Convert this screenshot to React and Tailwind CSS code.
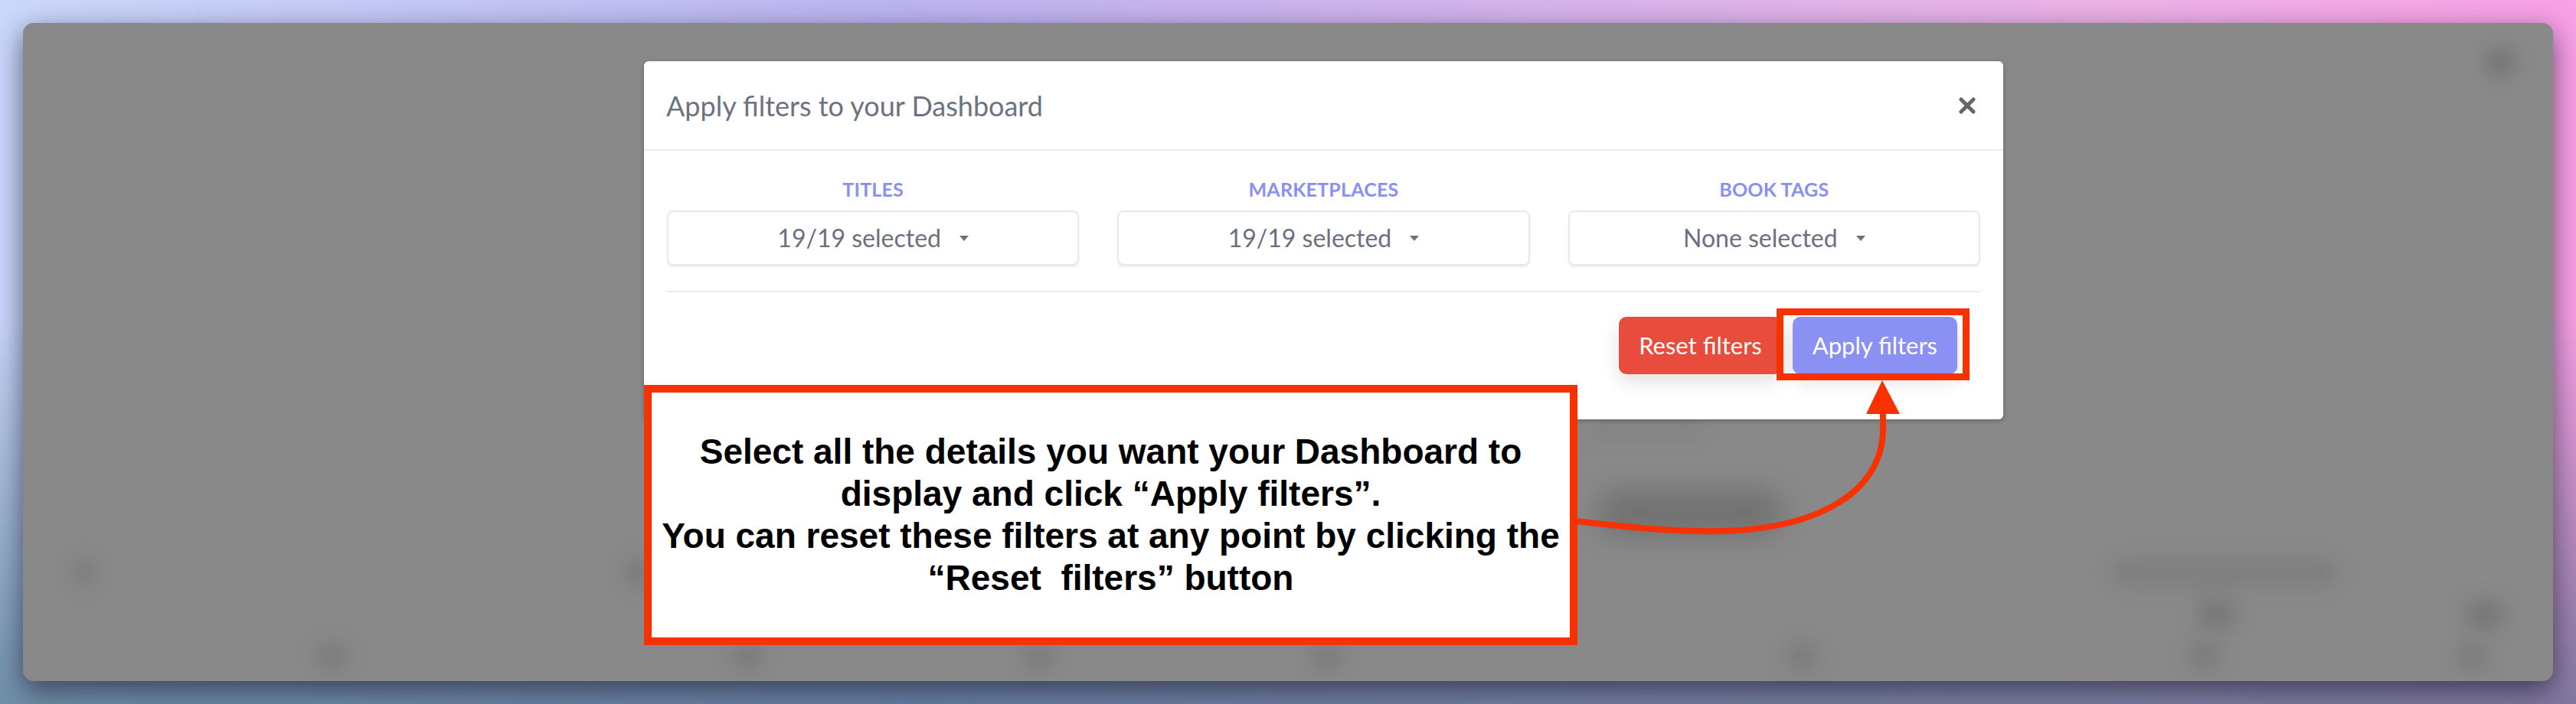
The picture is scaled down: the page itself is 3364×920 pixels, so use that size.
const FILTERS = [
  { label: "TITLES", value: "19/19 selected" },
  { label: "MARKETPLACES", value: "19/19 selected" },
  { label: "BOOK TAGS", value: "None selected" },
];

const RED = "#f73100";

function Blob({ className }) {
  return <div className={`rounded-full bg-[#555555] blur-[14px] ${className}`} />;
}

function Caret() {
  return (
    <svg width="12" height="7" viewBox="0 0 12 7" className="shrink-0">
      <polygon points="0,0 12,0 6,7" fill="#6b7080" />
    </svg>
  );
}

function FilterSelect({ label, value }) {
  return (
    <div className="flex flex-col items-center">
      <div className="text-[25px] leading-[24px] font-bold text-[#8a8ff2] tracking-[0.2px]">{label}</div>
      <div className="mt-[16px] w-full h-[72px] rounded-[8px] border-2 border-[#e7e9f1] shadow-[0_2px_2px_rgba(220,222,235,0.6)] flex items-center justify-center gap-[24px]">
        <span className="text-[32px] text-[#6b7080]">{value}</span>
        <Caret />
      </div>
    </div>
  );
}

export default function App() {
  return (
    <div
      className="relative w-[3364px] h-[920px] overflow-hidden p-[30px] bg-[linear-gradient(180deg,rgba(0,0,0,0)_45%,rgba(50,95,115,0.6)_100%),linear-gradient(90deg,#cbd8fb_0%,#bcb4f0_35%,#d6b3ec_60%,#edb2e6_82%,#f9a0e6_100%)]"
      style={{ fontFamily: "Lato, 'Open Sans', sans-serif" }}
    >
      {/* dimmed dashboard underneath */}
      <div className="h-full w-full rounded-[14px] bg-[#898989] shadow-[0_12px_36px_rgba(25,25,45,0.65)] flex flex-col overflow-hidden">
        <div className="flex justify-end pt-[36px] pr-[53px]">
          <Blob className="w-[32px] h-[32px] opacity-60 blur-[8px]" />
        </div>
        <div className="flex pl-[2045px] mt-[457px]">
          <Blob className="w-[150px] h-[14px] opacity-20" />
        </div>
        <div className="flex pl-[2054px] mt-[71px]">
          <Blob className="w-[246px] h-[60px] rounded-[20px] opacity-45 blur-[18px]" />
        </div>
        <div className="flex items-center mt-[30px] h-[36px]">
          <Blob className="ml-[70px] w-[20px] h-[36px] opacity-40" />
          <Blob className="ml-[700px] w-[26px] h-[36px] opacity-40" />
          <Blob className="ml-[1910px] w-[300px] h-[30px] rounded-[14px] opacity-25" />
        </div>
        <div className="flex items-center mt-[17px] h-[40px]">
          <Blob className="ml-[2840px] w-[50px] h-[36px] opacity-40" />
          <Blob className="ml-[300px] w-[50px] h-[36px] opacity-40" />
        </div>
        <div className="flex items-center mt-[20px] h-[30px]">
          <Blob className="ml-[384px] w-[40px] h-[30px] opacity-35" />
          <Blob className="ml-[502px] w-[40px] h-[30px] opacity-35" />
          <Blob className="ml-[340px] w-[40px] h-[30px] opacity-35" />
          <Blob className="ml-[336px] w-[40px] h-[30px] opacity-35" />
          <Blob className="ml-[581px] w-[40px] h-[30px] opacity-35" />
          <Blob className="ml-[485px] w-[40px] h-[30px] opacity-35" />
          <Blob className="ml-[311px] w-[40px] h-[30px] opacity-35" />
        </div>
      </div>

      {/* modal */}
      <div className="absolute left-[841px] top-[80px] w-[1775px] h-[468px] bg-white rounded-[6px] shadow-[0_2px_6px_rgba(0,0,0,0.25)] flex flex-col">
        <div className="h-[117px] shrink-0 flex items-center justify-between pl-[29px] pr-[36px] border-b-2 border-[#eceef5]">
          <h2 className="text-[36px] text-[#6d7282]">Apply filters to your Dashboard</h2>
          <svg width="22" height="22" viewBox="0 0 22 22">
            <path d="M3 3 L19 19 M19 3 L3 19" stroke="#666" strokeWidth="5" strokeLinecap="round" />
          </svg>
        </div>
        <div className="px-[30px] pt-[38px]">
          <div className="grid grid-cols-3 gap-[50px]">
            {FILTERS.map((f) => (
              <FilterSelect key={f.label} label={f.label} value={f.value} />
            ))}
          </div>
          <div className="mt-[33px] h-[2px] bg-[#e9ebf3]" />
          <div className="mt-[32px] flex justify-end gap-[14px] pr-[30px]">
            <button className="h-[75px] px-[26px] rounded-[10px] bg-[#e84c3d] text-white text-[31px] shadow-[0_10px_24px_rgba(0,0,0,0.12)]">
              Reset filters
            </button>
            <button className="h-[75px] px-[26px] rounded-[10px] bg-[#8a91f3] text-white text-[31px] shadow-[0_10px_24px_rgba(0,0,0,0.12)]">
              Apply filters
            </button>
          </div>
        </div>
      </div>

      {/* highlight round the apply button */}
      <div className="absolute left-[2320px] top-[403px] w-[252px] h-[94px] border-[9px] border-[#f73100]" />

      {/* callout */}
      <div
        className="absolute left-[841px] top-[503px] w-[1219px] h-[340px] border-[10px] border-[#f73100] bg-white flex items-center justify-center text-center"
        style={{ fontFamily: "'Liberation Sans', Arial, sans-serif" }}
      >
        <p className="text-[46px] leading-[55px] font-bold text-black whitespace-pre">
          {"Select all the details you want your Dashboard to\ndisplay and click \u201CApply filters\u201D.\nYou can reset these filters at any point by clicking the\n\u201CReset  filters\u201D button"}
        </p>
      </div>

      {/* arrow */}
      <svg className="absolute left-0 top-0 pointer-events-none" width="3364" height="920" viewBox="0 0 3364 920">
        <path
          d="M2059 681 C2150 692 2200 695 2250 694 C2380 690 2459 640 2459 560 L2459 536"
          fill="none"
          stroke={RED}
          strokeWidth="8"
        />
        <polygon points="2437,541 2481,541 2458,497" fill={RED} />
      </svg>
    </div>
  );
}
